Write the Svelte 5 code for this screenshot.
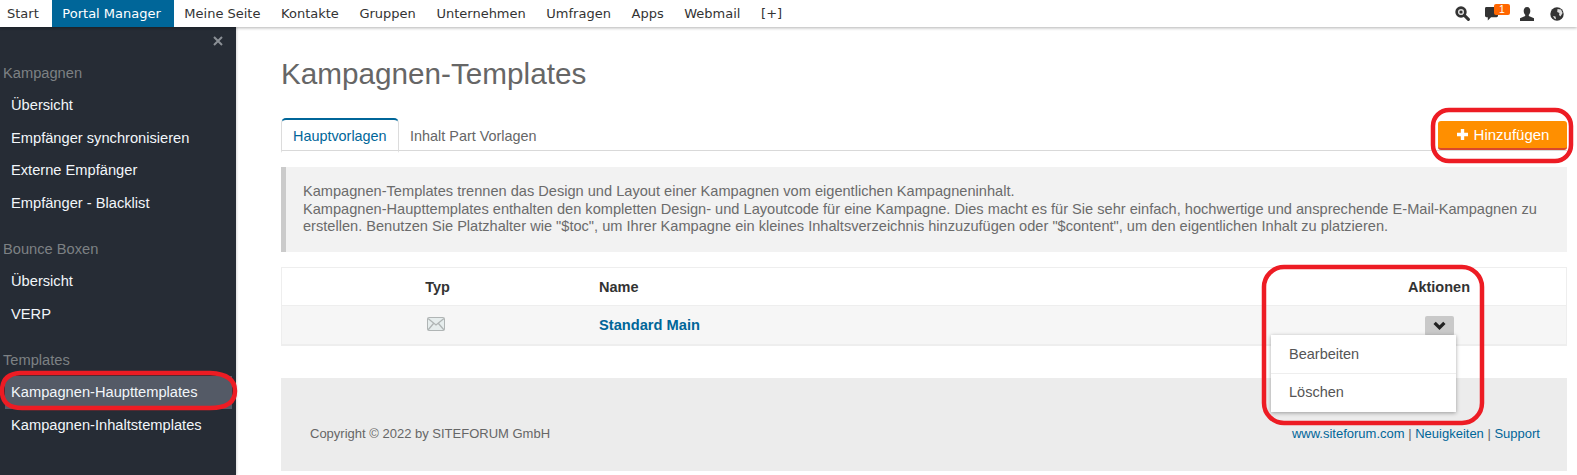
<script>
    const navItems = ['Start', 'Portal Manager', 'Meine Seite', 'Kontakte', 'Gruppen', 'Unternehmen', 'Umfragen', 'Apps', 'Webmail', '[+]'];
    const sideGroups = [
        { title: 'Kampagnen', items: ['Übersicht', 'Empfänger synchronisieren', 'Externe Empfänger', 'Empfänger - Blacklist'] },
        { title: 'Bounce Boxen', items: ['Übersicht', 'VERP'] },
        { title: 'Templates', items: ['Kampagnen-Haupttemplates', 'Kampagnen-Inhaltstemplates'] }
    ];
</script>

<div class="page">
    <header class="topbar">
        <nav class="topnav">
            {#each navItems as item}
                <span class="navitem" class:active={item === 'Portal Manager'}>{item}</span>
            {/each}
        </nav>
        <div class="topicons">
            <svg class="ic-search" width="15" height="15" viewBox="0 0 15 15">
                <circle cx="6" cy="6" r="4.4" fill="#d8d8d8" stroke="#333" stroke-width="2.6"/>
                <circle cx="6" cy="6" r="1.6" fill="#333"/>
                <path d="M9.4 9.4 L13.4 13.4" stroke="#333" stroke-width="3" stroke-linecap="round"/>
            </svg>
            <span class="chat">
                <svg width="13" height="14" viewBox="0 0 14 15"><path d="M0 1.5 Q0 0 1.5 0 H12.5 Q14 0 14 1.5 V9.5 Q14 11 12.5 11 H6.5 L3 14.5 V11 H1.5 Q0 11 0 9.5Z" fill="#333"/></svg>
                <span class="badge">1</span>
            </span>
            <svg class="ic-user" width="14" height="14" viewBox="0 0 14 14">
                <path d="M7 0 C9.4 0 10.3 1.9 10.3 3.9 C10.3 5.6 9.5 7 8.8 7.8 L8.8 8.9 L14 11.2 V14 H0 V11.2 L5.2 8.9 L5.2 7.8 C4.5 7 3.7 5.6 3.7 3.9 C3.7 1.9 4.6 0 7 0Z" fill="#333"/>
            </svg>
            <svg class="ic-globe" width="14" height="14" viewBox="0 0 14 14">
                <circle cx="7" cy="7" r="6.7" fill="#333"/>
                <path d="M7.5 2 L11 2.5 L12.6 6 L10.5 9.5 L9 8 L9.4 6 L7.2 5Z M3 9 L5.5 9.5 L6 12.3 L4.4 11.6Z" fill="#ddd"/>
            </svg>
        </div>
    </header>

    <div class="body">
        <aside class="sidebar">
            <div class="closerow">
                <svg width="10" height="10" viewBox="0 0 10 10"><path d="M1 1 L9 9 M9 1 L1 9" stroke="#8b9096" stroke-width="2"/></svg>
            </div>
            {#each sideGroups as group}
                <section class="sidegroup">
                    <h4>{group.title}</h4>
                    {#each group.items as item}
                        <div class="sideitem" class:current={item === 'Kampagnen-Haupttemplates'}>{item}</div>
                    {/each}
                </section>
            {/each}
        </aside>

        <main class="content">
            <h1>Kampagnen-Templates</h1>

            <div class="tabrow">
                <div class="tabs">
                    <span class="tab selected">Hauptvorlagen</span>
                    <span class="tab">Inhalt Part Vorlagen</span>
                </div>
                <button class="addbtn">
                    <svg width="13" height="13" viewBox="0 0 13 13"><path d="M6.5 1 V12 M1 6.5 H12" stroke="#fff" stroke-width="3.4"/></svg>
                    Hinzufügen
                </button>
            </div>

            <div class="infobox">
                Kampagnen-Templates trennen das Design und Layout einer Kampagnen vom eigentlichen Kampagneninhalt.<br>
                Kampagnen-Haupttemplates enthalten den kompletten Design- und Layoutcode für eine Kampagne. Dies macht es für Sie sehr einfach, hochwertige und ansprechende E-Mail-Kampagnen zu erstellen. Benutzen Sie Platzhalter wie "$toc", um Ihrer Kampagne ein kleines Inhaltsverzeichnis hinzuzufügen oder "$content", um den eigentlichen Inhalt zu platzieren.
            </div>

            <div class="table">
                <div class="row head">
                    <span class="c-typ">Typ</span>
                    <span class="c-name">Name</span>
                    <span class="c-act">Aktionen</span>
                </div>
                <div class="row data">
                    <span class="c-typ">
                        <svg class="mail" width="18" height="14" viewBox="0 0 18 14">
                            <rect x="0.5" y="0.5" width="17" height="13" rx="1" fill="#e6eded" stroke="#b0b5b5"/>
                            <path d="M1 1.5 L9 8 L17 1.5 M1 13 L6.5 6.5 M17 13 L11.5 6.5" fill="none" stroke="#b0b5b5" stroke-width="1.3"/>
                        </svg>
                    </span>
                    <span class="c-name link">Standard Main</span>
                    <span class="c-act">
                        <span class="toggle">
                            <svg width="13" height="9" viewBox="0 0 12 8"><path d="M1.5 1.5 L6 6 L10.5 1.5" fill="none" stroke="#222" stroke-width="3"/></svg>
                        </span>
                    </span>
                </div>
                <div class="menu">
                    <div class="menuitem">Bearbeiten</div>
                    <div class="menuitem">Löschen</div>
                </div>
            </div>

            <footer class="foot">
                <span>Copyright © 2022 by SITEFORUM GmbH</span>
                <span class="footlinks"><a href="#top">www.siteforum.com</a> | <a href="#top">Neuigkeiten</a> | <a href="#top">Support</a></span>
            </footer>
        </main>
    </div>

    <!-- red hand-drawn marks on top of the screenshot -->
    <svg class="marks" width="1577" height="475" viewBox="0 0 1577 475" fill="none" stroke="#ed1c24" stroke-width="4.5">
        <rect x="1433" y="110" width="138" height="51" rx="16"/>
        <rect x="1264" y="267" width="218" height="156" rx="20"/>
        <path d="M20 373 H210 Q235 374 235 391 Q235 408 210 408 H22 Q2 408 2 391 Q2 374 20 373Z"/>
    </svg>
</div>

<style>
    :global(body) {
        margin: 0;
        background: #fff;
    }

    .page {
        position: relative;
        width: 1577px;
        height: 475px;
        overflow: hidden;
        font-family: "Liberation Sans", Arial, sans-serif;
    }

    .topbar {
        position: relative;
        z-index: 2;
        display: flex;
        justify-content: space-between;
        height: 27px;
        background: #fff;
        box-shadow: 0 1px 3px rgba(0, 0, 0, 0.3);
    }

    .topnav {
        display: flex;
    }

    .navitem {
        padding: 0 10.3px;
        line-height: 27px;
        font-family: "DejaVu Sans", Verdana, sans-serif;
        font-size: 13px;
        color: #333;
        white-space: nowrap;
    }

    .navitem:first-child {
        padding-left: 7px;
        padding-right: 13.6px;
    }

    .navitem.active {
        padding-left: 10px;
        padding-right: 13.2px;
        background: #006699;
        color: #fff;
    }

    .topicons {
        display: flex;
        align-items: center;
        padding-right: 13px;
    }

    .ic-search {
        margin-right: 15px;
    }

    .chat {
        position: relative;
        display: flex;
        width: 25px;
        margin-right: 10px;
    }

    .badge {
        position: absolute;
        left: 9px;
        top: -3px;
        width: 16px;
        height: 11px;
        border-radius: 2px;
        background: #ff6600;
        color: #fff;
        font-size: 10.5px;
        line-height: 11px;
        text-align: center;
    }

    .ic-user {
        margin-right: 16px;
    }

    .body {
        display: flex;
        height: 448px;
    }

    .sidebar {
        flex: 0 0 236px;
        background: #262c35;
        box-shadow: 1px 0 2px rgba(0, 0, 0, 0.15);
    }

    .closerow {
        display: flex;
        justify-content: flex-end;
        height: 10px;
        padding: 9px 13px 0 0;
    }

    .sidegroup {
        margin-bottom: 14px;
    }

    .sidegroup:first-of-type {
        padding-top: 11px;
    }

    .sidegroup h4 {
        margin: 0;
        padding: 7px 0 6px 3px;
        height: 19px;
        font-size: 14.66px;
        font-weight: normal;
        line-height: 19px;
        color: #7d8184;
    }

    .sideitem {
        margin-left: 5px;
        margin-right: 4px;
        padding-left: 6px;
        height: 32.5px;
        font-size: 14.66px;
        line-height: 32.5px;
        color: #f2f6fa;
    }

    .sideitem.current {
        background: #545a66;
    }

    .content {
        flex: 1;
        padding: 0 10px 0 45px;
        min-width: 0;
    }

    h1 {
        box-sizing: border-box;
        margin: 0;
        padding-top: 28px;
        height: 65px;
        font-size: 29.7px;
        font-weight: normal;
        line-height: 38px;
        color: #666;
    }

    .tabrow {
        position: relative;
        display: flex;
        align-items: flex-end;
        height: 59px;
        margin-bottom: 16px;
    }

    .tabs {
        flex: 1;
        display: flex;
        height: 32px;
        border-bottom: 1px solid #d9d9d9;
    }

    .tab {
        padding: 0 11.5px;
        font-size: 14.4px;
        line-height: 36px;
        color: #666;
    }

    .tab.selected {
        height: 31px;
        padding: 0 11px;
        border: 1px solid #dcdcdc;
        border-top: 2px solid #006699;
        border-bottom: 2px solid #fff;
        border-radius: 5px 5px 0 0;
        line-height: 32px;
        color: #006699;
        margin-bottom: -2px;
    }

    .addbtn {
        position: absolute;
        right: 0;
        bottom: 1px;
        display: flex;
        align-items: center;
        justify-content: center;
        gap: 5px;
        width: 129px;
        height: 29px;
        padding: 0;
        border: 0;
        border-bottom: 2px solid #d9482b;
        border-radius: 3px;
        background: #ff8f00;
        color: #fff;
        font-family: inherit;
        font-size: 15px;
    }

    .infobox {
        box-sizing: border-box;
        height: 85px;
        padding: 16px 20px 0 17px;
        background: #f2f2f2;
        border-left: 5px solid #cbcbcb;
        font-size: 14.6px;
        line-height: 17.5px;
        color: #6b6b6b;
    }

    .table {
        position: relative;
        margin-top: 15px;
        border: 1px solid #eeeeee;
        border-bottom-width: 2px;
    }

    .row {
        display: grid;
        grid-template-columns: 311px 1fr auto;
        align-items: center;
    }

    .row.head {
        height: 37px;
        border-bottom: 1px solid #eeeeee;
        font-size: 14.5px;
        font-weight: bold;
        color: #333;
    }

    .row.data {
        height: 38px;
        background: #f6f6f6;
        font-size: 14.66px;
    }

    .c-typ {
        display: flex;
        justify-content: center;
    }

    .data .c-typ {
        padding-right: 3px;
        padding-bottom: 3px;
    }

    .c-name {
        padding-left: 6px;
    }

    .data .c-name {
        padding-bottom: 1px;
    }

    .link {
        font-weight: bold;
        color: #006699;
    }

    .c-act {
        display: flex;
        justify-content: flex-end;
        padding-right: 96px;
    }

    .data .c-act {
        padding-right: 112px;
    }

    .toggle {
        display: flex;
        align-items: center;
        justify-content: center;
        width: 29px;
        height: 20px;
        margin-top: 1px;
        border-radius: 2px;
        background: #c9c9c9;
    }

    .menu {
        position: absolute;
        z-index: 1;
        left: 989px;
        top: 67px;
        width: 185px;
        background: #fff;
        box-shadow: 0 1px 4px rgba(0, 0, 0, 0.35);
    }

    .menuitem {
        height: 38px;
        padding-left: 18px;
        font-size: 14.5px;
        line-height: 38px;
        color: #555;
    }

    .menuitem + .menuitem {
        border-top: 1px solid #eeeeee;
        line-height: 36px;
    }

    .foot {
        display: flex;
        justify-content: space-between;
        align-items: center;
        box-sizing: border-box;
        height: 93px;
        margin-top: 32px;
        padding: 18px 27px 0 29px;
        background: #ececec;
        font-size: 13px;
        color: #666;
    }

    .footlinks a {
        color: #006699;
        text-decoration: none;
    }

    .marks {
        position: absolute;
        left: 0;
        top: 0;
        z-index: 5;
        pointer-events: none;
    }
</style>
